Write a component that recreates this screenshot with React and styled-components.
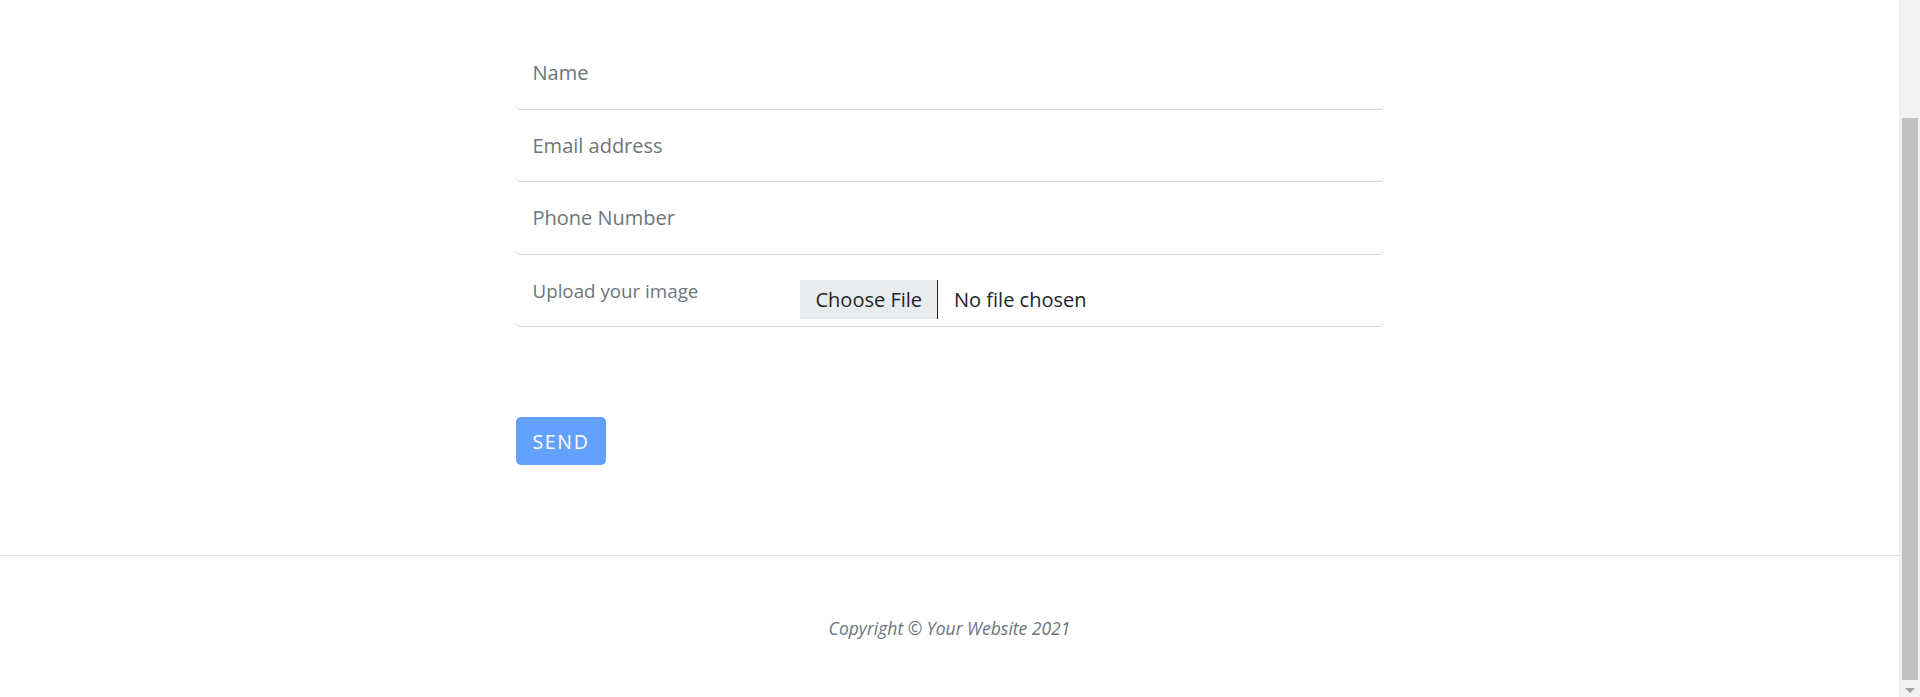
import styled, { createGlobalStyle } from "styled-components";

const GlobalStyle = createGlobalStyle`
  html, body {
    margin: 0;
    padding: 0;
    background: #fff;
    overflow: hidden;
  }
  body {
    font-family: "Open Sans", "Liberation Sans", sans-serif;
    color: #212529;
  }
`;

const Page = styled.div`
  display: flex;
  width: 1920px;
  height: 697px;
`;

const Main = styled.main`
  flex: 1;
  display: flex;
  flex-direction: column;
`;

const FormSection = styled.section`
  padding-top: 37px;
`;

const Form = styled.form`
  width: 868px;
  margin: 0 auto;
  display: flex;
  flex-direction: column;
`;

const Field = styled.div`
  display: flex;
  align-items: center;
  box-sizing: border-box;
  height: 72.5px;
  padding: 0 17px;
  border-bottom: 1px solid #ced4da;
  border-radius: 5px;
`;

const Label = styled.span`
  font-size: ${(p) => (p.$small ? "18.75px" : "20px")};
  color: #6c757d;
  min-width: ${(p) => (p.$small ? "267px" : "auto")};
`;

const FileBox = styled.div`
  display: flex;
  align-items: center;
  height: 39px;
  margin-top: 19px;
  font-size: 20px;
  color: #212529;
`;

const FileButton = styled.span`
  display: flex;
  align-items: center;
  height: 100%;
  padding: 0 15px 0 16px;
  background: #e9ecef;
  border-right: 1px solid #212529;
`;

const FileName = styled.span`
  padding-left: 16px;
`;

const SendButton = styled.button`
  align-self: flex-start;
  margin-top: 90px;
  width: 90px;
  height: 48px;
  border: none;
  border-radius: 5px;
  background: #62a1fe;
  color: #fff;
  font-family: "Open Sans", "Liberation Sans", sans-serif;
  font-size: 19.5px;
  letter-spacing: 1.7px;
  text-transform: uppercase;
  padding: 0 0 0 1px;
`;

const Footer = styled.footer`
  margin-top: 90px;
  border-top: 1px solid #dee2e6;
  padding-top: 60px;
  text-align: center;
`;

const Copyright = styled.p`
  margin: 0;
  font-size: 17.5px;
  line-height: 24px;
  font-style: italic;
  color: #6c757d;
`;

const ScrollTrack = styled.aside`
  width: 21px;
  background: #f1f1f1;
  display: flex;
  flex-direction: column;
  align-items: center;
`;

const ScrollThumb = styled.div`
  width: 16px;
  height: 562px;
  margin-top: 118px;
  margin-left: 1px;
  background: #c1c1c1;
`;

const ScrollArrow = styled.div`
  margin-top: 8px;
  margin-left: 1px;
  width: 0;
  height: 0;
  border-left: 5px solid transparent;
  border-right: 5px solid transparent;
  border-top: 5px solid #a3a3a3;
`;

const fields = ["Name", "Email address", "Phone Number"];

const App = () => {
  return (
    <Page>
      <GlobalStyle />
      <Main>
        <FormSection>
          <Form onSubmit={(e) => e.preventDefault()}>
            {fields.map((f) => (
              <Field key={f}>
                <Label>{f}</Label>
              </Field>
            ))}
            <Field>
              <Label $small>Upload your image</Label>
              <FileBox>
                <FileButton>Choose File</FileButton>
                <FileName>No file chosen</FileName>
              </FileBox>
            </Field>
            <SendButton type="submit">Send</SendButton>
          </Form>
        </FormSection>
        <Footer>
          <Copyright>Copyright © Your Website 2021</Copyright>
        </Footer>
      </Main>
      <ScrollTrack>
        <ScrollThumb />
        <ScrollArrow />
      </ScrollTrack>
    </Page>
  );
};

export default App;
